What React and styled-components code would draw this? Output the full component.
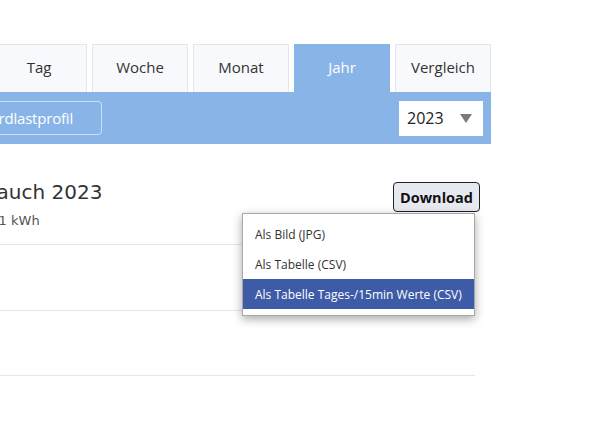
import React from "react";
import styled, { createGlobalStyle } from "styled-components";

const Global = createGlobalStyle`
  html, body { margin: 0; padding: 0; background: #fff; overflow: hidden; }
  body { font-family: "Open Sans", "Liberation Sans", sans-serif; color: #333; }
  * { box-sizing: border-box; }
`;

const BLUE = "#89b4e7";

const Page = styled.div`
  width: 589px;
  height: 431px;
  padding-top: 44px;
  overflow: hidden;
`;

const Panel = styled.div`
  width: 500px;
  margin-left: -9px;
`;

const Tabs = styled.div`
  display: flex;
  gap: 5px;
`;

const Tab = styled.div`
  width: 96px;
  height: 48px;
  display: flex;
  align-items: center;
  justify-content: center;
  font-size: 15px;
  background: ${(p) => (p.$active ? BLUE : "#f7f9fc")};
  color: ${(p) => (p.$active ? "#fff" : "#333")};
  border: 1px solid ${(p) => (p.$active ? BLUE : "#e3e7ec")};
  border-bottom: none;
  padding-bottom: 3px;
`;

const Toolbar = styled.div`
  height: 52px;
  background: ${BLUE};
  display: flex;
  align-items: center;
  justify-content: space-between;
  padding-right: 8px;
`;

const LeftGroup = styled.div`
  width: 111px;
  display: flex;
  justify-content: flex-end;
`;

const ProfileButton = styled.button`
  flex: none;
  height: 34px;
  padding: 0 28px 0 12px;
  border: 1px solid rgba(255, 255, 255, 0.55);
  border-radius: 4px;
  background: transparent;
  color: #fff;
  font-family: "Open Sans", sans-serif;
  font-size: 15px;
  letter-spacing: -0.2px;
  white-space: nowrap;
`;

const YearSelect = styled.div`
  width: 84px;
  height: 35px;
  background: #fff;
  display: flex;
  align-items: center;
  justify-content: space-between;
  padding: 0 11px 0 8px;
  font-size: 16px;
  color: #222;
`;

const Content = styled.div`
  margin-top: 36px;
  padding-right: 16px;
`;

const Header = styled.div`
  display: flex;
  justify-content: space-between;
  align-items: flex-start;
`;

const TitleBlock = styled.div`
  margin-left: -48px;
  font-family: "DejaVu Sans", sans-serif;
`;

const Title = styled.div`
  font-size: 20px;
  line-height: 24px;
  color: #333;
  white-space: nowrap;
`;

const Subtitle = styled.div`
  margin-top: 9px;
  padding-left: 6px;
  font-size: 13px;
  line-height: 16px;
  color: #555;
  white-space: nowrap;
`;

const DownloadWrap = styled.div`
  position: relative;
  margin-top: 2px;
  margin-right: -5px;
`;

const DownloadButton = styled.button`
  width: 87px;
  height: 30px;
  padding: 0;
  border: 1px solid #222;
  border-radius: 4px;
  background: #e7e9f1;
  color: #111;
  font-family: "Open Sans", sans-serif;
  font-weight: 700;
  font-size: 14.5px;
`;

const Menu = styled.div`
  position: absolute;
  top: 31px;
  right: 5px;
  width: 233px;
  padding: 5px 0 6px;
  background: #fff;
  border: 1px solid #a8a8a8;
  box-shadow: 0 3px 9px rgba(0, 0, 0, 0.35);
  z-index: 2;
`;

const MenuItem = styled.div`
  height: 30px;
  display: flex;
  align-items: center;
  padding-left: 12px;
  font-size: 12px;
  white-space: nowrap;
  background: ${(p) => (p.$active ? "#3e5ba8" : "transparent")};
  color: ${(p) => (p.$active ? "#fff" : "#333")};
`;

const List = styled.div`
  margin-top: 15px;
`;

const Row = styled.div`
  height: ${(p) => p.$h}px;
  border-top: 1px solid #e6e6e6;
`;

const Caret = () => (
  <svg width="12" height="9" viewBox="0 0 12 9">
    <polygon points="0,0 12,0 6,9" fill="#7a7a7a" />
  </svg>
);

export default function App() {
  const tabs = ["Tag", "Woche", "Monat", "Jahr", "Vergleich"];
  return (
    <Page>
      <Global />
      <Panel>
        <Tabs>
          {tabs.map((t) => (
            <Tab key={t} $active={t === "Jahr"}>
              {t}
            </Tab>
          ))}
        </Tabs>
        <Toolbar>
          <LeftGroup>
            <ProfileButton>Standardlastprofil</ProfileButton>
          </LeftGroup>
          <YearSelect>
            <span>2023</span>
            <Caret />
          </YearSelect>
        </Toolbar>
        <Content>
          <Header>
            <TitleBlock>
              <Title>Verbrauch 2023</Title>
              <Subtitle>12.534,1 kWh</Subtitle>
            </TitleBlock>
            <DownloadWrap>
              <DownloadButton>Download</DownloadButton>
              <Menu>
                <MenuItem>Als Bild (JPG)</MenuItem>
                <MenuItem>Als Tabelle (CSV)</MenuItem>
                <MenuItem $active>Als Tabelle Tages-/15min Werte (CSV)</MenuItem>
              </Menu>
            </DownloadWrap>
          </Header>
          <List>
            <Row $h={66} />
            <Row $h={65} />
            <Row $h={60} />
          </List>
        </Content>
      </Panel>
    </Page>
  );
}
